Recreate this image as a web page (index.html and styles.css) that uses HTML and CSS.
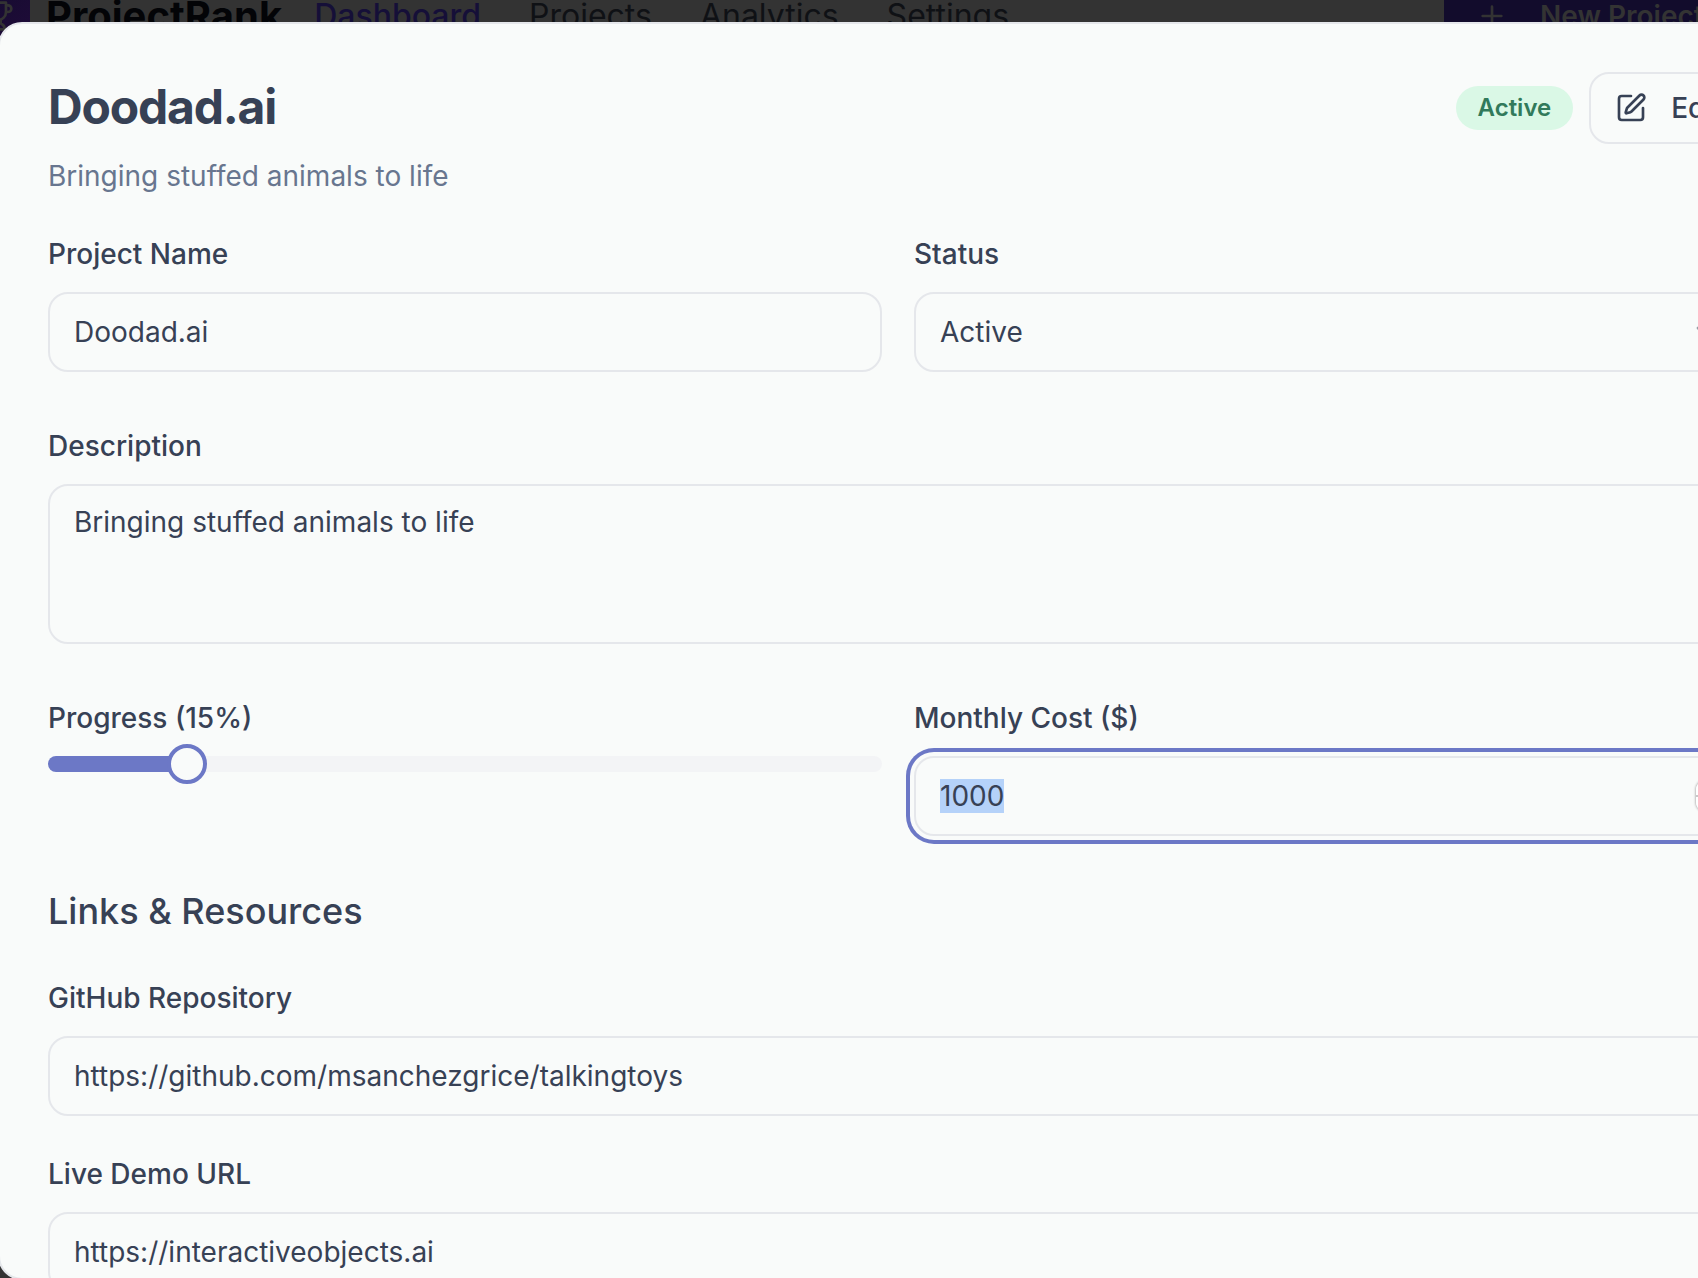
FILE: index.html
```html
<!DOCTYPE html>
<html lang="en">
<head>
<meta charset="utf-8">
<meta name="viewport" content="width=device-width, initial-scale=1">
<title>ProjectRank</title>
<link rel="stylesheet" href="styles.css">
</head>
<body>
<header class="topbar">
  <a class="brand" href="#">
    <span class="brand-mark">
      <svg class="icon" viewBox="0 0 24 24" aria-hidden="true"><path d="M6 9H4.500a2.500 2.500 0 0 1 0-5H6M18 9h1.500a2.500 2.500 0 0 0 0-5H18M4 22h16M10 14.660V17c0 .55-.47.98-.97 1.210C7.850 18.750 7 20.240 7 22M14 14.660V17c0 .55.47.98.97 1.210C16.150 18.750 17 20.240 17 22M18 2H6v7a6 6 0 0 0 12 0V2Z"/></svg>
    </span>
    <span class="brand-name">ProjectRank</span>
  </a>
  <nav class="nav">
    <a class="nav-link nav-link-current" href="#">Dashboard</a>
    <a class="nav-link" href="#">Projects</a>
    <a class="nav-link" href="#">Analytics</a>
    <a class="nav-link" href="#">Settings</a>
  </nav>
  <button class="new-project" type="button">
    <svg class="icon" viewBox="0 0 24 24" aria-hidden="true"><path d="M5 12h14M12 5v14"/></svg>
    New Project
  </button>
</header>

<main class="dialog" role="dialog" aria-labelledby="dialog-title">
  <div class="dialog-header">
    <div class="heading">
      <h1 class="title" id="dialog-title">Doodad.ai</h1>
      <p class="subtitle">Bringing stuffed animals to life</p>
    </div>
    <div class="actions">
      <span class="badge">Active</span>
      <button class="edit" type="button">
        <svg class="icon" viewBox="0 0 24 24" aria-hidden="true"><path d="M12 3H5a2 2 0 0 0-2 2v14a2 2 0 0 0 2 2h14a2 2 0 0 0 2-2v-7"/><path d="M18.375 2.625a1 1 0 0 1 3 3l-9.013 9.014a2 2 0 0 1-.853.505l-2.873.84a.5.5 0 0 1-.62-.62l.84-2.873a2 2 0 0 1 .506-.852z"/></svg>
        Edit
      </button>
    </div>
  </div>

  <form class="form">
    <div class="row">
      <div class="field">
        <label class="label" for="name">Project Name</label>
        <input class="control" id="name" type="text" value="Doodad.ai">
      </div>
      <div class="field">
        <label class="label" for="status">Status</label>
        <div class="overlay-box">
          <select class="control" id="status"><option>Active</option></select>
          <svg class="icon chevron" viewBox="0 0 24 24" aria-hidden="true"><path d="m6 9 6 6 6-6"/></svg>
        </div>
      </div>
    </div>

    <div class="field">
      <label class="label" for="description">Description</label>
      <textarea class="control control-area" id="description">Bringing stuffed animals to life</textarea>
    </div>

    <div class="row">
      <div class="field">
        <label class="label" for="progress">Progress (15%)</label>
        <input class="slider" id="progress" type="range" min="0" max="100" value="15" style="--value: 15%">
      </div>
      <div class="field">
        <label class="label" for="cost">Monthly Cost ($)</label>
        <div class="overlay-box">
          <input class="control" id="cost" type="number" value="1000" autofocus>
          <span class="stepper" aria-hidden="true"></span>
        </div>
      </div>
    </div>
  </form>

  <section class="links">
    <h2 class="section-title">Links &amp; Resources</h2>
    <div class="links-fields">
      <div class="field">
        <label class="label" for="github">GitHub Repository</label>
        <input class="control" id="github" type="text" value="https://github.com/msanchezgrice/talkingtoys">
      </div>
      <div class="field">
        <label class="label" for="demo">Live Demo URL</label>
        <input class="control" id="demo" type="text" value="https://interactiveobjects.ai">
      </div>
    </div>
  </section>
</main>
<script src="script.js"></script>
</body>
</html>
```
FILE: script.js
```js
const cost = document.getElementById("cost");
cost.focus();
cost.select();

const progress = document.getElementById("progress");
progress.addEventListener("input", () => {
  progress.style.setProperty("--value", progress.value + "%");
});
```
FILE: styles.css
```css
:root {
  --text: #374155;
  --muted: #68768f;
  --surface: #f9fbfa;
  --border: #e5e7eb;
  --primary: #6c78c6;
  --backdrop: #333333;
}

* {
  box-sizing: border-box;
}

html,
body {
  height: 100%;
}

body {
  display: flex;
  flex-direction: column;
  margin: 0;
  overflow: hidden;
  background: var(--backdrop);
  color: var(--text);
  font-family: Inter, "Liberation Sans", sans-serif;
  font-size: 28px;
  line-height: 40px;
}

button,
input,
select,
textarea {
  font: inherit;
  color: inherit;
}

h1,
h2,
p {
  margin: 0;
}

.icon {
  width: 32px;
  height: 32px;
  flex: none;
  fill: none;
  stroke: currentColor;
  stroke-width: 2;
  stroke-linecap: round;
  stroke-linejoin: round;
}

/* The page header, cut off by the top of the window */
.topbar {
  display: flex;
  flex: none;
  align-items: center;
  height: 80px;
  margin: -24px -102px -34px -34px;
}

.brand {
  display: flex;
  align-items: center;
  gap: 16px;
  margin-right: 32px;
  color: #030407;
  text-decoration: none;
}

.brand-mark {
  display: grid;
  place-items: center;
  width: 64px;
  height: 64px;
  border-radius: 16px;
  background: linear-gradient(135deg, #120c2c, #200b3a);
  color: var(--backdrop);
}

.brand-name {
  font-size: 40px;
  font-weight: 700;
}

.nav {
  display: flex;
  gap: 48px;
}

.nav-link {
  color: #0f1115;
  font-size: 32px;
  text-decoration: none;
}

.nav-link-current {
  color: #150f38;
  font-weight: 500;
}

.new-project {
  display: flex;
  align-items: center;
  gap: 32px;
  width: 356px;
  height: 80px;
  margin-left: auto;
  padding: 0 32px;
  border: 0;
  background: #120c2c;
  color: var(--backdrop);
  font-weight: 600;
  white-space: nowrap;
}

/* The dialog runs on past the right and bottom edges of the window */
.dialog {
  position: relative;
  flex: 1;
  min-height: 0;
  margin: 0 -100px -2px -2px;
  padding: 48px;
  overflow: hidden;
  border: 2px solid var(--border);
  border-radius: 24px;
  background: var(--surface);
}

.dialog-header {
  display: flex;
  align-items: flex-start;
  justify-content: space-between;
  margin-bottom: 38px;
}

.heading {
  display: grid;
  gap: 14px;
}

.title {
  font-size: 48px;
  font-weight: 700;
  line-height: 70px;
  letter-spacing: -0.025em;
}

.subtitle {
  color: var(--muted);
}

.actions {
  display: flex;
  align-items: center;
  gap: 16px;
}

.badge {
  padding: 6px 22px;
  border-radius: 22px;
  background: #daf8e6;
  color: #317a5b;
  font-size: 24px;
  font-weight: 600;
  line-height: 32px;
}

.edit {
  display: flex;
  align-items: center;
  gap: 24px;
  height: 72px;
  padding: 0 24px;
  border: 2px solid var(--border);
  border-radius: 20px;
  background: var(--surface);
  font-weight: 500;
}

.form {
  display: grid;
  gap: 54px;
}

.row {
  display: grid;
  grid-template-columns: 1fr 1fr;
  align-items: start;
  gap: 32px;
}

.field {
  display: flex;
  flex-direction: column;
}

.label {
  margin-bottom: 18px;
  font-weight: 500;
}

.control {
  display: block;
  width: 100%;
  height: 80px;
  margin: 0;
  padding: 0 24px;
  border: 2px solid var(--border);
  border-radius: 20px;
  outline: 0;
  background: var(--surface);
  appearance: none;
}

.control:focus {
  box-shadow: 0 0 0 4px var(--surface), 0 0 0 8px var(--primary);
}

.control::selection {
  background: #b5d2f9;
  color: var(--text);
}

.control::-webkit-inner-spin-button {
  display: none;
}

.control-area {
  height: 160px;
  padding: 16px 24px;
  resize: none;
}

/* Stacks an icon over the right end of a control */
.overlay-box {
  display: grid;
  align-items: center;
}

.overlay-box > * {
  grid-area: 1 / 1;
}

.chevron {
  justify-self: end;
  margin-right: 26px;
  opacity: 0.5;
  pointer-events: none;
}

.stepper {
  justify-self: end;
  width: 26px;
  height: 32px;
  margin-right: 26px;
  border-radius: 10px;
  background: linear-gradient(#ffffff 15px, #c8c8c8 15px, #c8c8c8 17px, #ffffff 17px);
  box-shadow: 0 0 2px 1px #c0c0c0;
}

.slider {
  width: 100%;
  height: 40px;
  margin: -12px 0 0;
  background: none;
  appearance: none;
}

.slider::-webkit-slider-runnable-track {
  height: 16px;
  border-radius: 8px;
  background: linear-gradient(to right, var(--primary) var(--value), #f3f4f6 var(--value));
}

.slider::-webkit-slider-thumb {
  width: 40px;
  height: 40px;
  margin-top: -12px;
  border: 4px solid var(--primary);
  border-radius: 50%;
  background: var(--surface);
  appearance: none;
}

.links {
  margin-top: 48px;
}

.section-title {
  margin-bottom: 40px;
  font-size: 36px;
  font-weight: 500;
  line-height: 54px;
}

.links-fields {
  display: grid;
  gap: 38px;
}
```
